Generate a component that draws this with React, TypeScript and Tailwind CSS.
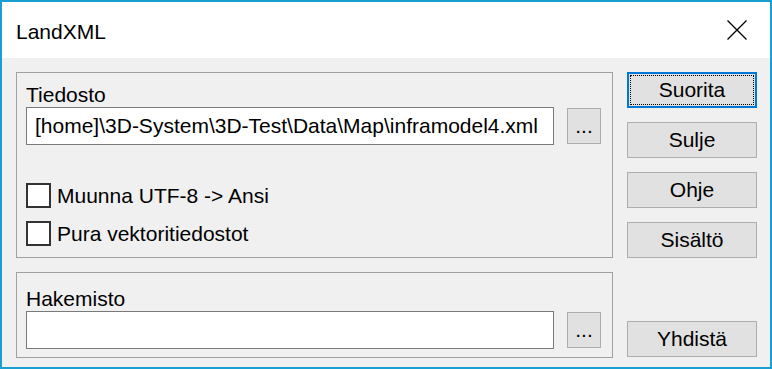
import React from "react";

function Btn({ label, focused = false }: { label: string; focused?: boolean }) {
  if (focused) {
    return (
      <div className="h-[36px] w-[130px] border-2 border-[#0078d7] bg-[#e1e1e1] p-[1px]">
        <div className="flex h-full w-full items-center justify-center border border-dotted border-black leading-[24px]">
          {label}
        </div>
      </div>
    );
  }
  return (
    <div className="flex h-[36px] w-[130px] items-center justify-center border border-[#adadad] bg-[#e1e1e1] leading-[24px]">
      {label}
    </div>
  );
}

function Browse() {
  return (
    <div className="flex h-[36px] w-[34px] items-center justify-center border border-[#adadad] bg-[#e1e1e1] leading-[24px]">
      ...
    </div>
  );
}

function Check({ label }: { label: string }) {
  return (
    <div className="flex items-center gap-[6px]">
      <div className="h-[25px] w-[25px] border-2 border-[#333333] bg-white" />
      <span className="leading-[24px]">{label}</span>
    </div>
  );
}

export default function App() {
  return (
    <div
      className="flex h-[369px] w-[772px] flex-col border-2 border-[#1a9fd3] bg-[#f0f0f0] text-[21px] text-black"
      style={{ fontFamily: '"Liberation Sans", Arial, sans-serif' }}
    >
      <div className="flex h-[56px] items-center justify-between bg-white pl-[14px] pr-[23px]">
        <span className="mt-[4px] leading-[24px]">LandXML</span>
        <svg width="20" height="20" viewBox="0 0 20 20" className="mt-[-1px]">
          <path d="M0.5 0.5 L19.5 19.5 M19.5 0.5 L0.5 19.5" stroke="#000" strokeWidth="1.3" fill="none" />
        </svg>
      </div>
      <div className="flex flex-1 gap-[14px] pl-[14px] pr-[13px] pt-[14px]">
        <div className="flex w-[597px] flex-col gap-[14px]">
          <div className="flex h-[186px] flex-col border border-[#a0a0a0] pl-[9px] pr-[10px] pt-[10px]">
            <div className="leading-[24px]">Tiedosto</div>
            <div className="flex items-center gap-[13px]">
              <div className="flex h-[38px] w-[528px] items-center border border-[#7a7a7a] bg-white pl-[8px] leading-[24px]">
                [home]\3D-System\3D-Test\Data\Map\inframodel4.xml
              </div>
              <Browse />
            </div>
            <div className="mt-[38px] flex flex-col gap-[13px]">
              <Check label="Muunna UTF-8 -> Ansi" />
              <Check label="Pura vektoritiedostot" />
            </div>
          </div>
          <div className="flex h-[86px] flex-col border border-[#a0a0a0] pl-[9px] pr-[10px] pt-[14px]">
            <div className="leading-[24px]">Hakemisto</div>
            <div className="flex items-center gap-[13px]">
              <div className="h-[38px] w-[528px] border border-[#7a7a7a] bg-white" />
              <Browse />
            </div>
          </div>
        </div>
        <div className="flex w-[130px] flex-col gap-[14px] pb-[10px]">
          <Btn label="Suorita" focused />
          <Btn label="Sulje" />
          <Btn label="Ohje" />
          <Btn label="Sisältö" />
          <div className="mt-auto">
            <Btn label="Yhdistä" />
          </div>
        </div>
      </div>
    </div>
  );
}
